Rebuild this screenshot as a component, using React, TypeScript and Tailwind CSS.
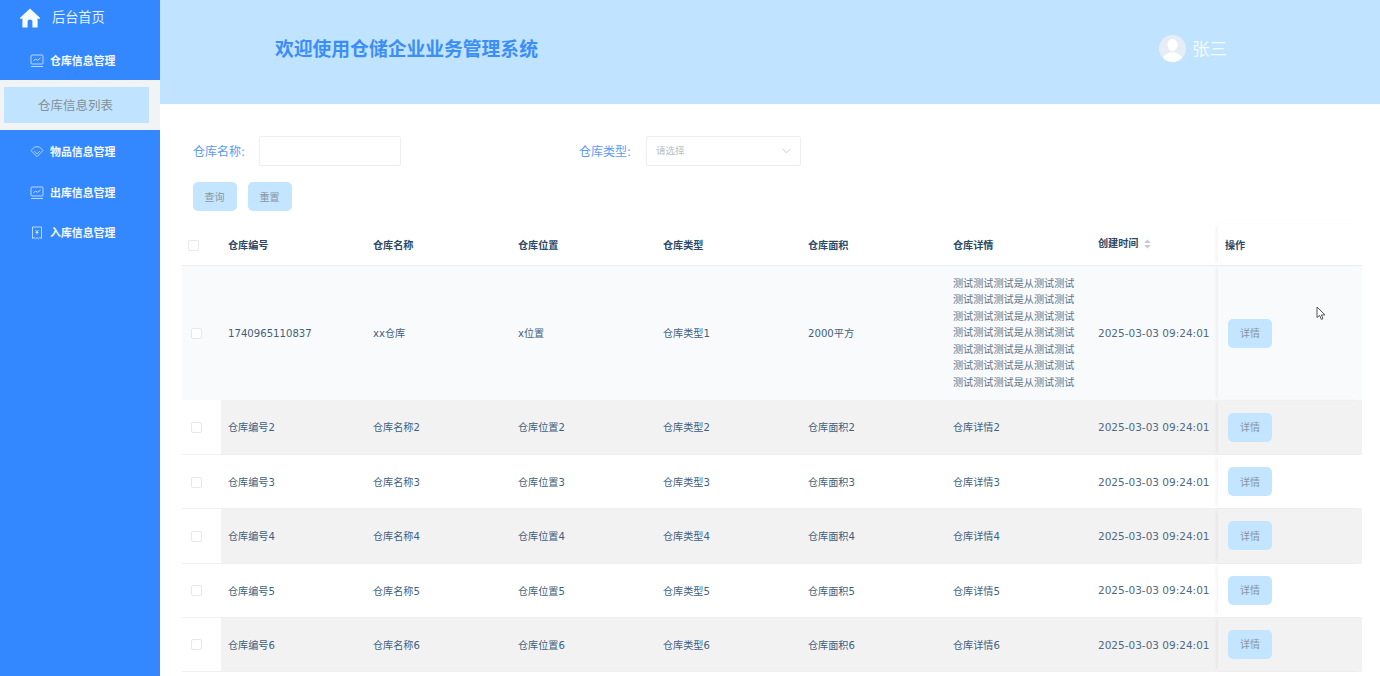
import React from "react";

const FONT = "[font-family:'DejaVu_Sans','Noto_Sans_CJK_SC',sans-serif]";

function Monitor() {
  return (
    <svg width="14" height="14" viewBox="0 0 14 14" fill="none" stroke="#c9e2ff" strokeWidth="0.9">
      <rect x="1" y="1" width="12" height="9" rx="1" />
      <path d="M3.5 7 L5.5 5 L7.5 6.3 L10.5 4" />
      <path d="M1 12.5 H13" />
    </svg>
  );
}
function Diamond() {
  return (
    <svg width="15" height="14" viewBox="0 0 15 14" fill="none" stroke="#c9e2ff" strokeWidth="0.9">
      <path d="M1 5.5 L5 1.5 H10 L14 5.5 L7.5 12 Z" />
      <path d="M4.5 6 L7.5 9 L10.5 6" />
    </svg>
  );
}
function Ticket() {
  return (
    <svg width="14" height="14" viewBox="0 0 14 14" fill="none" stroke="#c9e2ff" strokeWidth="0.9">
      <path d="M2.5 1 H11.5 V12.5 L9.8 11.5 L8.4 12.8 L7 11.5 L5.6 12.8 L4.2 11.5 L2.5 12.5 Z" />
      <path d="M5.5 4 L7 6 L8.5 4 M7 6 V8.5 M5.5 6.5 H8.5" />
    </svg>
  );
}

function NavItem({ icon, label, cls }: { icon: React.ReactNode; label: string; cls: string }) {
  return (
    <div className={`flex items-center pl-[30px] gap-[6px] ${cls}`}>
      <span className="w-[14px] h-[14px] flex items-center justify-center">{icon}</span>
      <span className="text-[10.9px] font-bold text-[#f4f9ff] leading-none pt-[2px]">{label}</span>
    </div>
  );
}

const columns = ["仓库编号", "仓库名称", "仓库位置", "仓库类型", "仓库面积", "仓库详情"];
const desc = Array.from({ length: 7 }, () => "测试测试测试是从测试测试");

function Check() {
  return <span className="block w-[11px] h-[11px] rounded-[2px] border border-[#e6e8ee] bg-white" />;
}

function DetailBtn() {
  return (
    <button className="w-[44px] h-[29px] rounded-[5px] bg-[#c3e5ff] text-[10px] text-[#8a959e] leading-none pt-[2px]">详情</button>
  );
}

const SHADOW = "shadow-[-3px_0_4px_-2px_rgba(0,0,0,0.07)]";

function Row({ cells, h, bg, checkBg, border, textPad }: { cells: React.ReactNode[]; h: string; bg: string; checkBg: string; border: string; textPad: string }) {
  return (
    <div className={`flex items-stretch ${h} ${border}`}>
      <div className={`w-[39px] shrink-0 flex items-center pl-[9px] pt-[1px] ${checkBg}`}><Check /></div>
      <div className={`flex flex-1 items-stretch ${bg}`}>
        {cells.map((c, i) => (
          <div key={i} className={`w-[145px] shrink-0 px-[7px] flex items-center text-[10.15px] text-[#3f5f7c] ${textPad}`}>{c}</div>
        ))}
        <div className={`w-[127px] shrink-0 pl-[7px] flex items-center text-[10.5px] text-[#4f6a82] whitespace-nowrap ${textPad}`}>2025-03-03 09:24:01</div>
        <div className={`relative z-10 flex-1 pl-[10px] flex items-center ${SHADOW}`}>
          <DetailBtn />
        </div>
      </div>
    </div>
  );
}

export default function App() {
  return (
    <div className={`flex w-[1380px] h-[676px] overflow-hidden bg-white relative ${FONT}`}>
      <aside className="w-[160px] shrink-0 bg-[#3388ff] flex flex-col">
        <div className="h-[36px] flex items-center pl-[19px] gap-[11px]">
          <svg width="22" height="20" viewBox="0 0 22 20" fill="#f6fbff">
            <path d="M11 0.5 L0.8 10 L2 11.3 L3.4 10.2 V19.5 H8.6 V13.5 C8.6 12.2 9.7 11.5 11 11.5 C12.3 11.5 13.4 12.2 13.4 13.5 V19.5 H18.6 V10.2 L20 11.3 L21.2 10 Z" />
          </svg>
          <span className="text-[13.2px] text-[#e4f0ff] leading-none pb-[1px]">后台首页</span>
        </div>
        <NavItem icon={<Monitor />} label="仓库信息管理" cls="h-[44px] pt-[6px]" />
        <div className="h-[50px] bg-[#f2f3f5] py-[7px] pl-[4px] pr-[11px]">
          <div className="h-[36px] bg-[#c0e3ff] flex items-center justify-center pr-[2px] pt-[2px] text-[12.5px] text-[#858f98]">仓库信息列表</div>
        </div>
        <NavItem icon={<Diamond />} label="物品信息管理" cls="h-[42px] pt-[2px]" />
        <NavItem icon={<Monitor />} label="出库信息管理" cls="h-[40px] pt-[2px]" />
        <NavItem icon={<Ticket />} label="入库信息管理" cls="h-[40px] pt-[2px]" />
      </aside>

      <main className="flex-1 min-w-0 flex flex-col">
        <header className="h-[104px] shrink-0 bg-[#c0e3ff] flex items-center pl-[115px]">
          <h1 className="w-[884px] mb-[3px] text-[18.8px] font-bold text-[#3b8df7] leading-none">欢迎使用仓储企业业务管理系统</h1>
          <div className="w-[27px] h-[27px] mb-[7px] rounded-full bg-[#e6edf7] overflow-hidden flex items-center justify-center">
            <svg width="27" height="27" viewBox="0 0 27 27" fill="#ffffff">
              <ellipse cx="13.5" cy="10" rx="5" ry="6.2" />
              <path d="M3 27 C3 20 8 19 11 17.5 H16 C19 19 24 20 24 27 Z" />
            </svg>
          </div>
          <span className="ml-[6px] mb-[5px] text-[17.5px] text-[#f6fbff] leading-none">张三</span>
        </header>

        <section className="flex-1 min-h-0 pl-[22px] pr-[18px]">
          <div className="flex items-center pt-[32px] pl-[11px]">
            <span className="w-[66px] text-[12px] text-[#5a9bf6] leading-none pt-[1px]">仓库名称:</span>
            <span className="w-[142px] h-[30px] border border-[#eceef5] rounded-[2px] bg-white" />
            <span className="ml-[178px] w-[67px] text-[12px] text-[#5a9bf6] leading-none pt-[1px]">仓库类型:</span>
            <span className="w-[155px] h-[30px] border border-[#eceef5] rounded-[2px] bg-white flex items-center justify-between pl-[9px] pr-[9px]">
              <span className="text-[9.5px] text-[#b9bec6] pt-[1px]">请选择</span>
              <svg width="9" height="6" viewBox="0 0 9 6" fill="none" stroke="#c6cad1" strokeWidth="0.9"><path d="M0.5 0.8 L4.5 4.8 L8.5 0.8" /></svg>
            </span>
          </div>
          <div className="flex pt-[16px] pl-[11px] gap-[11px]">
            <button className="w-[44px] h-[29px] rounded-[5px] bg-[#c3e5ff] text-[10px] text-[#8a959e] leading-none pt-[2px] pr-[1px]">查询</button>
            <button className="w-[44px] h-[29px] rounded-[5px] bg-[#c3e5ff] text-[10px] text-[#8a959e] leading-none pt-[2px] pr-[1px]">重置</button>
          </div>

          <div className="mt-[13px] w-[1180px]">
            <div className="flex items-stretch h-[42px] border-b border-[#eceef3]">
              <div className="w-[39px] shrink-0 flex items-center pl-[6px] pt-[1px]"><Check /></div>
              {columns.map((c) => (
                <div key={c} className="w-[145px] shrink-0 px-[7px] pt-[2px] flex items-center text-[10.15px] font-bold text-[#2c4a66]">{c}</div>
              ))}
              <div className="w-[127px] shrink-0 pl-[7px] pb-[1px] flex items-center gap-[5px] text-[10.15px] font-bold text-[#2c4a66]">
                创建时间
                <svg width="7" height="10" viewBox="0 0 7 10" fill="#c3c8d0"><path d="M3.5 0.5 L6.8 4 H0.2 Z M3.5 9.5 L0.2 6 H6.8 Z" /></svg>
              </div>
              <div className={`relative z-10 flex-1 pl-[7px] pt-[2px] flex items-center text-[10.15px] font-bold text-[#2c4a66] ${SHADOW}`}>操作</div>
            </div>

            <Row
              h="h-[134px]"
              bg="bg-[#f9fafc]"
              checkBg="bg-[#f9fafc]"
              border=""
              textPad="pt-[1px]"
              cells={[
                <span>1740965110837</span>,
                "xx仓库",
                "x位置",
                "仓库类型1",
                "2000平方",
                <div className="text-[#5d7489] leading-[16.5px] whitespace-nowrap">
                  {desc.map((d, i) => <div key={i}>{d}</div>)}
                </div>,
              ]}
            />
            {[2, 3, 4, 5, 6].map((n) => (
              <Row
                key={n}
                h={n === 2 ? "h-[55px]" : "h-[54.25px]"}
                bg={n % 2 === 0 ? "bg-[#f2f2f3]" : "bg-white"}
                checkBg="bg-white"
                border="border-b border-[#eef0f4]"
                textPad="pt-[2px]"
                cells={[`仓库编号${n}`, `仓库名称${n}`, `仓库位置${n}`, `仓库类型${n}`, `仓库面积${n}`, `仓库详情${n}`]}
              />
            ))}
          </div>
        </section>
      </main>

      <svg className="absolute left-[1316px] top-[306px]" width="11" height="15" viewBox="0 0 11 15" fill="#fff" stroke="#555" strokeWidth="1">
        <path d="M1 1 V11.5 L3.6 9.4 L5.3 13.4 L7 12.6 L5.4 8.9 H9 Z" />
      </svg>
    </div>
  );
}
